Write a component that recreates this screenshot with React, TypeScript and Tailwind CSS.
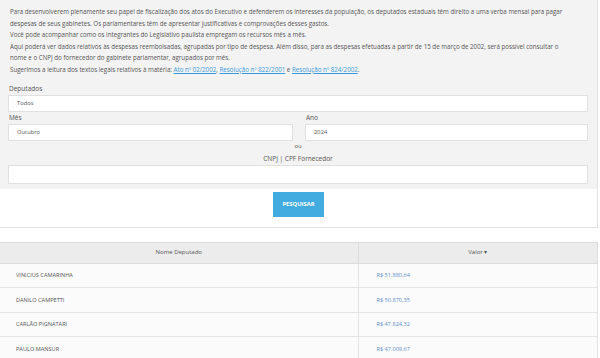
import React from "react";

const rows = [
	{ nome: "VINICIUS CAMARINHA", valor: "R$ 51.880,64" },
	{ nome: "DANILO CAMPETTI", valor: "R$ 50.870,35" },
	{ nome: "CARLÃO PIGNATARI", valor: "R$ 47.824,32" },
	{ nome: "PAULO MANSUR", valor: "R$ 47.009,67" },
];

const font = { fontFamily: '"Open Sans", "Noto Sans", sans-serif' };

export default function App() {
	return (
		<div className="w-[600px] h-[358px] overflow-hidden bg-white text-[#555]" style={font}>
			{/* painel de busca */}
			<div className="w-[598px] border-r border-b border-[#e2e2e2] bg-[#f3f3f3]">
				<div className="px-[10px] pt-[6px] text-[6.2px] leading-[11.6px] whitespace-nowrap">
					<p>
						Para desenvolverem plenamente seu papel de fiscalização dos atos do Executivo e defenderem os interesses da população, os deputados estaduais têm direito a uma verba mensal para pagar
					</p>
					<p>despesas de seus gabinetes. Os parlamentares têm de apresentar justificativas e comprovações desses gastos.</p>
					<p>Você pode acompanhar como os integrantes do Legislativo paulista empregam os recursos mês a mês.</p>
					<p>
						Aqui poderá ver dados relativos às despesas reembolsadas, agrupadas por tipo de despesa. Além disso, para as despesas efetuadas a partir de 15 de março de 2002, será possível consultar o
					</p>
					<p>nome e o CNPJ do fornecedor do gabinete parlamentar, agrupados por mês.</p>
					<p>
						Sugerimos a leitura dos textos legais relativos à matéria:{" "}
						<a className="text-[#3a9ad9] underline">Ato nº 02/2002</a>,{" "}
						<a className="text-[#3a9ad9] underline">Resolução nº 822/2001</a> e{" "}
						<a className="text-[#3a9ad9] underline">Resolução nº 824/2002</a>.
					</p>
				</div>

				<div className="px-[8px] pt-[8px] pr-[9px] text-[6.5px]">
					<div className="leading-[10px] pl-[1px]">Deputados</div>
					<div className="h-[17px] mt-[1px] bg-white border border-[#e0e0e0] flex items-center px-[8px] text-[5.8px]">
						Todos
					</div>

					<div className="flex gap-[12px] mt-[1px]">
						<div className="w-[285px]">
							<div className="leading-[10px] pl-[1px]">Mês</div>
							<div className="h-[17px] mt-[1px] bg-white border border-[#e0e0e0] flex items-center px-[8px] text-[5.8px]">
								Outubro
							</div>
						</div>
						<div className="flex-1">
							<div className="leading-[10px] pl-[1px]">Ano</div>
							<div className="h-[17px] mt-[1px] bg-white border border-[#e0e0e0] flex items-center px-[8px] text-[5.8px]">
								2024
							</div>
						</div>
					</div>

					<div className="text-center text-[5.8px] leading-[8px] mt-[1px]">ou</div>
					<div className="text-center leading-[10px] mt-[4px]">CNPJ | CPF Fornecedor</div>
					<div className="h-[19px] mt-[1px] bg-white border border-[#e0e0e0]" />
				</div>

				<div className="bg-white mt-[5px] flex justify-center pt-[3px] pb-[10px]">
					<button className="w-[51px] h-[25px] bg-[#42abe0] text-white text-[5.8px] font-bold">
						PESQUISAR
					</button>
				</div>
			</div>

			{/* tabela */}
			<table className="mt-[14px] w-[598px] border-collapse text-[6px]">
				<thead>
					<tr className="h-[21px] bg-[#ececec] border-t border-b border-[#dcdcdc]">
						<th className="w-[358px] font-normal border-r border-[#dcdcdc]">Nome Deputado</th>
						<th className="font-normal border-r border-[#dcdcdc]">Valor ▾</th>
					</tr>
				</thead>
				<tbody>
					{rows.map((r) => (
						<tr key={r.nome} className="h-[24.5px] border-b border-[#e4e4e4] bg-[#fbfbfb]">
							<td className="pl-[16px] border-r border-[#e4e4e4] text-[5.6px]">{r.nome}</td>
							<td className="pl-[18px] border-r border-[#e4e4e4] text-[5.6px] text-[#5a8fc8]">{r.valor}</td>
						</tr>
					))}
				</tbody>
			</table>
		</div>
	);
}
